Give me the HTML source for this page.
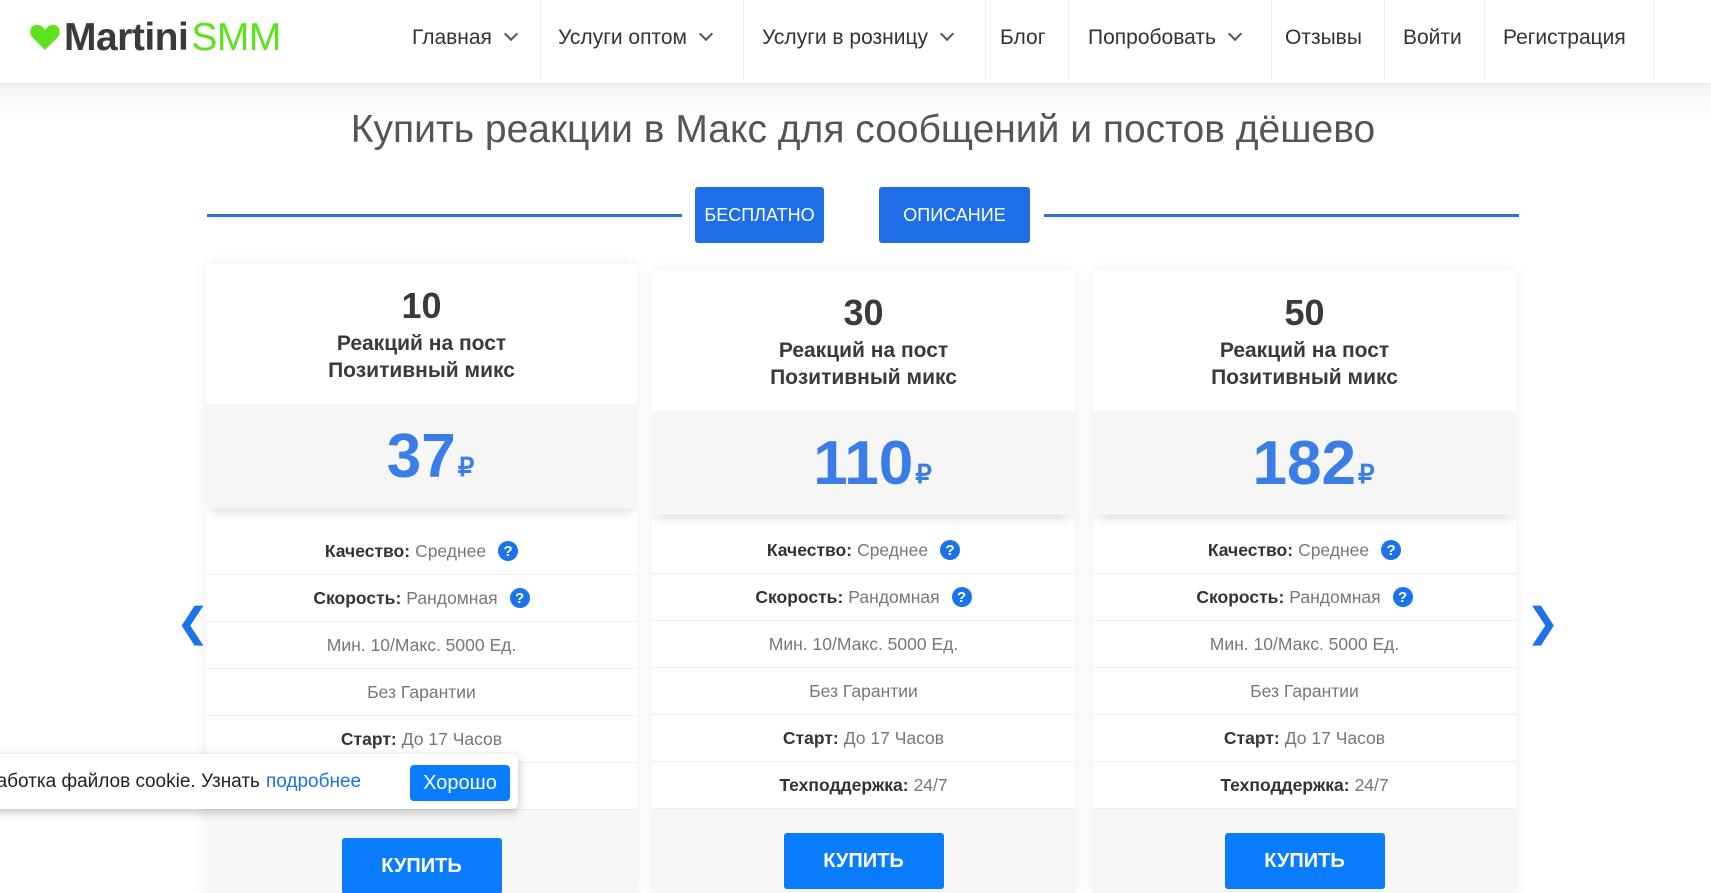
<!DOCTYPE html>
<html style="overflow:hidden;height:893px"><head><meta charset="utf-8"><style>
*{box-sizing:border-box;margin:0;padding:0}
body{width:1711px;height:893px;overflow:hidden;background:#fff;font-family:"Liberation Sans",sans-serif;position:relative;color:#444}
.hdr{position:absolute;left:0;top:0;width:1711px;height:83px;background:#fff;box-shadow:0 2px 6px rgba(0,0,0,.05)}
.band{position:absolute;left:0;top:83px;width:1711px;height:40px;background:linear-gradient(#f5f5f5,#fff)}
.logo{position:absolute;left:30px;top:16px;font-size:39px;font-weight:bold;color:#3a3a3a;letter-spacing:-0.5px}
.logo span{color:#5ee21f;font-weight:normal;margin-left:3px}
.nav{position:absolute;top:-4px;height:83px;display:flex;align-items:center;font-size:21px;color:#333}
.sep{position:absolute;top:0;width:1px;height:80px;background:#eee}
.chev{display:inline-block;width:10px;height:10px;border-right:2px solid #555;border-bottom:2px solid #555;transform:rotate(45deg);margin-left:14px;margin-top:-8px}
h1{position:absolute;top:108px;left:0;width:1711px;text-align:center;font-weight:300;font-size:39px;color:#555;padding-left:15px}
.line{position:absolute;top:214px;height:3px;background:#2a6fdb}
.btn{position:absolute;top:187px;height:56px;background:#1f6ee8;color:#fff;font-size:18px;display:flex;align-items:center;justify-content:center;border-radius:3px}
.card{position:absolute;background:#fff;box-shadow:0 0 12px rgba(0,0,0,.08);overflow:hidden}
.ch{height:140px;text-align:center;color:#3a3a3a;font-weight:bold}
.ch .n{font-size:36px;padding-top:22px;line-height:40px}
.ch .t{font-size:21px;line-height:27px;margin-top:4px}
.pr{height:104px;background:#f6f6f6;box-shadow:0 8px 10px -4px rgba(0,0,0,.12);display:flex;align-items:center;justify-content:center;color:#3b7de6;font-weight:bold;font-size:62px;padding-left:18px}
.pr small{font-size:26px;margin-top:22px;margin-left:2px}
.row{height:47px;border-bottom:1px solid #eee;display:flex;align-items:center;justify-content:center;font-size:17.5px;color:#777}
.row b{color:#333;margin-right:5px}
.q{display:inline-flex;width:20px;height:20px;border-radius:50%;background:#1a73e8;color:#fff;font-size:15px;font-weight:bold;align-items:center;justify-content:center;margin-left:12px}
.foot{background:#f7f7f7;height:200px;position:relative}
.buy{position:absolute;left:50%;transform:translateX(-50%);width:160px;height:56px;background:#0a7cff;color:#fff;font-weight:bold;font-size:20px;display:flex;align-items:center;justify-content:center;border-radius:3px}
.arr{position:absolute;top:600px;font-size:40px;color:#1a73e8}
.cookie{position:absolute;left:-10px;top:754px;width:528px;height:55px;background:#fff;border-radius:6px;box-shadow:0 3px 10px rgba(0,0,0,.25);font-size:19px;color:#222;display:flex;align-items:center}
.cookie a{color:#1a73e8;margin-left:6px}
.ok{position:absolute;left:420px;top:11px;width:100px;height:36px;background:#0a7cff;color:#fff;border-radius:4px;display:flex;align-items:center;justify-content:center;font-size:20px}
</style></head><body>
<div class="band"></div>
<div class="hdr">
<div class="logo"><svg width="30" height="26" viewBox="0 0 30 26" style="vertical-align:0px;margin-right:4px"><path d="M15 26 L2 13 C-2 8 1 0 8 1 C11 1.5 13.5 3.5 15 6 C16.5 3.5 19 1.5 22 1 C29 0 32 8 28 13 Z" fill="#5ee21f"/></svg>Martini<span>SMM</span></div>
<div class="nav" style="left:412px">Главная<i class="chev"></i></div>
<div class="sep" style="left:540px"></div>
<div class="nav" style="left:558px">Услуги оптом<i class="chev"></i></div>
<div class="sep" style="left:743px"></div>
<div class="nav" style="left:762px">Услуги в розницу<i class="chev"></i></div>
<div class="sep" style="left:985px"></div>
<div class="nav" style="left:1000px">Блог</div>
<div class="sep" style="left:1068px"></div>
<div class="nav" style="left:1088px">Попробовать<i class="chev"></i></div>
<div class="sep" style="left:1271px"></div>
<div class="nav" style="left:1285px">Отзывы</div>
<div class="sep" style="left:1384px"></div>
<div class="nav" style="left:1403px">Войти</div>
<div class="sep" style="left:1484px"></div>
<div class="nav" style="left:1503px">Регистрация</div>
<div class="sep" style="left:1653px"></div>
</div>
<h1>Купить реакции в Макс для сообщений и постов дёшево</h1>
<div class="line" style="left:207px;width:475px"></div>
<div class="line" style="left:1044px;width:475px"></div>
<div class="btn" style="left:695px;width:129px">БЕСПЛАТНО</div>
<div class="btn" style="left:879px;width:151px">ОПИСАНИЕ</div>

<div class="card" style="left:206px;top:264px;width:431px;height:629px">
<div class="ch"><div class="n">10</div><div class="t">Реакций на пост<br>Позитивный микс</div></div>
<div class="pr">37<small>₽</small></div>
<div style="height:20px"></div>
<div class="row"><b>Качество:</b> Среднее <span class="q">?</span></div>
<div class="row"><b>Скорость:</b> Рандомная <span class="q">?</span></div>
<div class="row">Мин. 10/Макс. 5000 Ед.</div>
<div class="row">Без Гарантии</div>
<div class="row"><b>Старт:</b> До 17 Часов</div>
<div class="row"><b>Техподдержка:</b> 24/7</div>
<div class="foot"><div class="buy" style="top:28px">КУПИТЬ</div></div>
</div>

<div class="card" style="left:652px;top:271px;width:423px;height:622px">
<div class="ch"><div class="n">30</div><div class="t">Реакций на пост<br>Позитивный микс</div></div>
<div class="pr">110<small>₽</small></div>
<div style="height:12px"></div>
<div class="row"><b>Качество:</b> Среднее <span class="q">?</span></div>
<div class="row"><b>Скорость:</b> Рандомная <span class="q">?</span></div>
<div class="row">Мин. 10/Макс. 5000 Ед.</div>
<div class="row">Без Гарантии</div>
<div class="row"><b>Старт:</b> До 17 Часов</div>
<div class="row"><b>Техподдержка:</b> 24/7</div>
<div class="foot"><div class="buy" style="top:24px">КУПИТЬ</div></div>
</div>

<div class="card" style="left:1093px;top:271px;width:423px;height:622px">
<div class="ch"><div class="n">50</div><div class="t">Реакций на пост<br>Позитивный микс</div></div>
<div class="pr">182<small>₽</small></div>
<div style="height:12px"></div>
<div class="row"><b>Качество:</b> Среднее <span class="q">?</span></div>
<div class="row"><b>Скорость:</b> Рандомная <span class="q">?</span></div>
<div class="row">Мин. 10/Макс. 5000 Ед.</div>
<div class="row">Без Гарантии</div>
<div class="row"><b>Старт:</b> До 17 Часов</div>
<div class="row"><b>Техподдержка:</b> 24/7</div>
<div class="foot"><div class="buy" style="top:24px">КУПИТЬ</div></div>
</div>

<div class="arr" style="left:176px">❮</div>
<div class="arr" style="left:1526px">❯</div>

<div class="cookie"><span style="white-space:nowrap;margin-left:-4px">работка файлов cookie. Узнать</span><a>подробнее</a><div class="ok">Хорошо</div></div>
</body></html>
